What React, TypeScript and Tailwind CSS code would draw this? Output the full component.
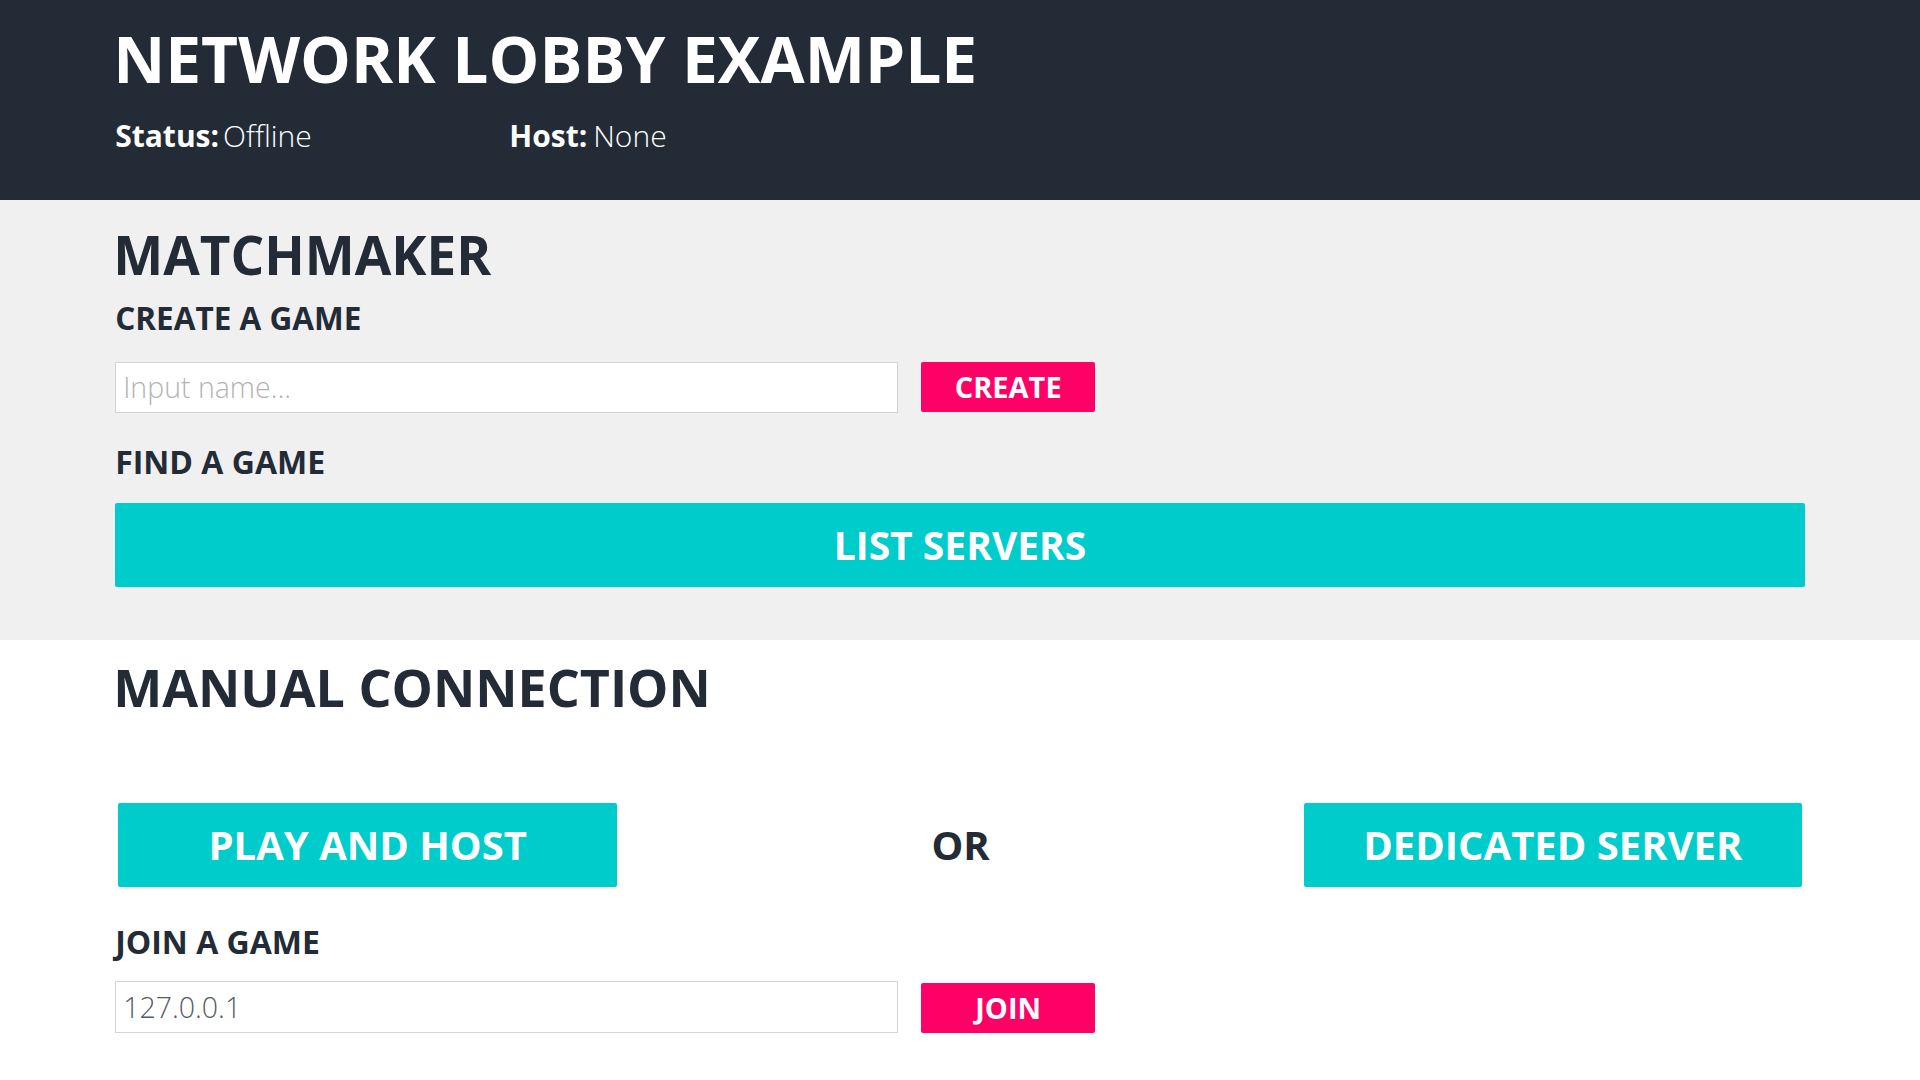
const font = { fontFamily: '"Open Sans", "Liberation Sans", sans-serif' };

const PinkButton = ({ label }: { label: string }) => (
  <button className="w-[174px] h-[50px] rounded-[2px] bg-[#ff0066] text-white font-bold text-[29px] leading-none flex items-center justify-center">
    {label}
  </button>
);

const TealButton = ({ label, className = '' }: { label: string; className?: string }) => (
  <button
    className={`h-[84px] rounded-[2px] bg-[#00cccc] text-white font-bold text-[40px] leading-none flex items-center justify-center ${className}`}
  >
    {label}
  </button>
);

const App = () => {
  return (
    <div className="w-full min-h-screen bg-white text-[#222b36]" style={font}>
      {/* header */}
      <header className="h-[200px] bg-[#232b36] px-[6%] pt-[27px] text-white">
        <h1 className="-ml-[2px] text-[64px] font-bold leading-none">NETWORK LOBBY EXAMPLE</h1>
        <div className="flex mt-[30px] text-[30px] leading-none">
          <p className="w-[394px]">
            <span className="font-bold">Status:</span>
            <span className="ml-[4px] font-light">Offline</span>
          </p>
          <p>
            <span className="font-bold">Host:</span>
            <span className="ml-[6px] font-light">None</span>
          </p>
        </div>
      </header>

      {/* matchmaker */}
      <section className="bg-[#f0f0f0] px-[6%] pt-[28px] pb-[53px]">
        <h2 className="-ml-[2px] text-[53px] font-bold leading-none">MATCHMAKER</h2>
        <h3 className="mt-[21px] text-[31.5px] font-bold leading-none">CREATE A GAME</h3>
        <div className="mt-[28px] flex items-start gap-[23px]">
          <input
            className="w-[783px] h-[51px] bg-white border border-[#d4d4d4] px-[7px] text-[28.5px] font-light text-[#555c66] placeholder:text-[#b4b4b4] outline-none"
            placeholder="Input name..."
            style={font}
          />
          <PinkButton label="CREATE" />
        </div>
        <h3 className="mt-[33px] text-[32px] font-bold leading-none">FIND A GAME</h3>
        <button className="mt-[25px] w-full h-[84px] rounded-[2px] bg-[#00cccc] text-white font-bold text-[39px] leading-none flex items-center justify-center">
          LIST SERVERS
        </button>
      </section>

      {/* manual connection */}
      <section className="px-[6%] pt-[21px]">
        <h2 className="-ml-[2px] text-[52px] font-bold leading-none">MANUAL CONNECTION</h2>
        <div className="mt-[90px] flex items-center justify-between px-[3px]">
          <TealButton label="PLAY AND HOST" className="w-[499px]" />
          <span className="text-[40px] font-bold leading-none">OR</span>
          <TealButton label="DEDICATED SERVER" className="w-[498px]" />
        </div>
        <h3 className="mt-[39px] text-[32px] font-bold leading-none">JOIN A GAME</h3>
        <div className="mt-[23px] flex items-start gap-[23px]">
          <input
            className="w-[783px] h-[52px] bg-white border border-[#d4d4d4] px-[7px] text-[28.5px] font-light text-[#555c66] outline-none"
            defaultValue="127.0.0.1"
            style={font}
          />
          <div className="mt-[2px]">
            <PinkButton label="JOIN" />
          </div>
        </div>
      </section>
    </div>
  );
};

export default App;
